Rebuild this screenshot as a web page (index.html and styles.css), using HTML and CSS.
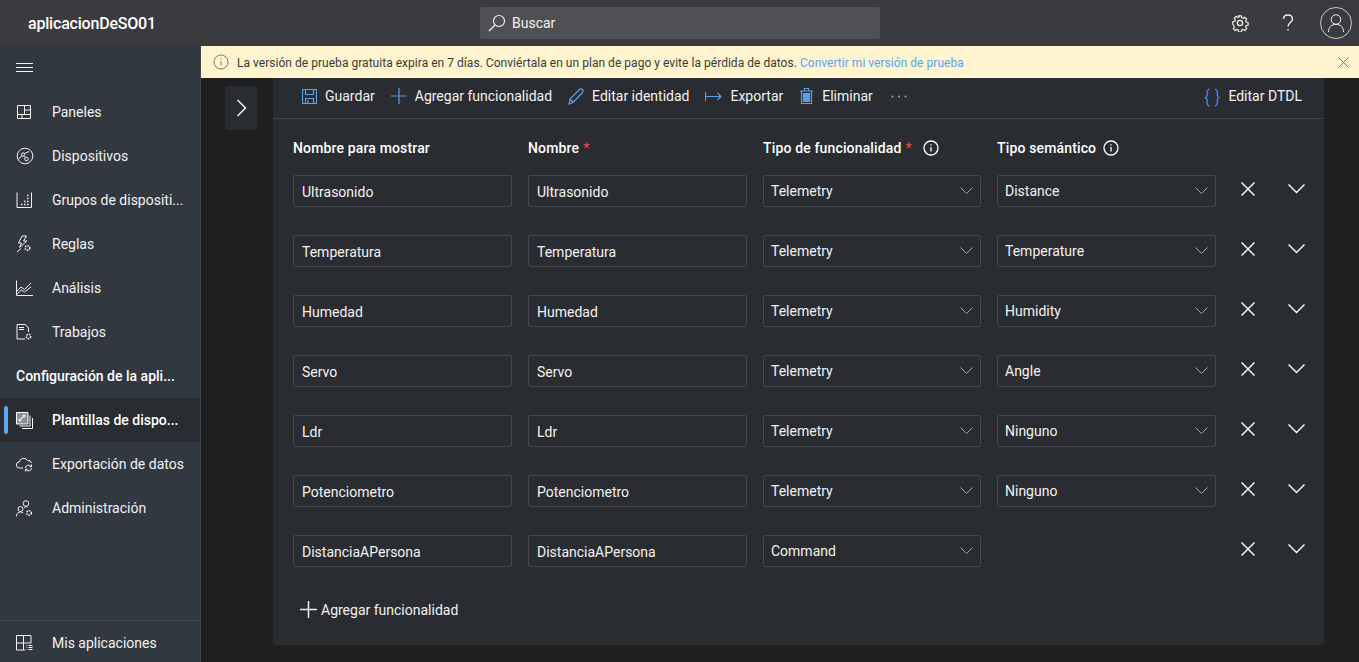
FILE: index.html
```html
<!DOCTYPE html>
<html lang="es">
<head>
  <meta charset="UTF-8">
  <title>aplicacionDeSO01</title>
  <link rel="stylesheet" href="styles.css">
</head>
<body>
  <header class="topbar">
    <div class="app-name">aplicacionDeSO01</div>
    <div class="search">
      <svg class="ico bright" width="20" height="20" viewBox="0 0 20 20"><circle cx="11" cy="8" r="5.500"/><path d="M7 12l-6 6"/></svg>
      <span>Buscar</span>
    </div>
    <div class="top-actions">
      <svg class="ico gear" width="18" height="18" viewBox="0 0 18 18"><circle cx="9" cy="9" r="2.600"/><path d="M7.500 1h3l.5 2.200 1.400.6 1.900-1.200 2.100 2.100-1.200 1.900.6 1.400 2.200.5v3l-2.200.5-.6 1.400 1.200 1.900-2.100 2.100-1.900-1.200-1.400.6-.5 2.200h-3l-.5-2.200-1.400-.6-1.900 1.200-2.100-2.100 1.200-1.900-.6-1.400L1 10.500v-3l2.200-.5.6-1.400-1.200-1.900 2.100-2.100 1.900 1.200 1.400-.6z" transform="translate(.9 .9) scale(.9)"/></svg>
      <svg class="ico help" width="12" height="18" viewBox="0 0 12 18"><path d="M1.500 5C1.500 2.500 3.500 1 6 1s4.500 1.600 4.500 4c0 3.500-4.500 3.500-4.500 7.500"/><path d="M6 15v1.500"/></svg>
      <div class="avatar">
        <svg class="ico" width="18" height="20" viewBox="0 0 18 20"><circle cx="9" cy="6.500" r="4.800"/><path d="M1.500 19c0-5 3.200-7.700 7.500-7.700s7.500 2.700 7.500 7.700"/></svg>
      </div>
    </div>
  </header>

  <div class="shell">
    <nav class="sidebar">
      <div class="nav-item burger">
        <svg class="ico" width="18" height="12" viewBox="0 0 18 12"><path d="M0 1.500h17M0 5.500h17M0 9.500h17"/></svg>
      </div>
      <a class="nav-item">
        <svg class="ico" width="16" height="16" viewBox="0 0 16 16"><path d="M1.500 1.500h13v13h-13zM1.500 10.500h13M8.500 1.500v9M8.500 6h6M6 10.500v4"/></svg>
        <span>Paneles</span>
      </a>
      <a class="nav-item">
        <svg class="ico" width="18" height="18" viewBox="0 0 18 18"><circle cx="9" cy="9" r="7.800"/><circle cx="7" cy="7.500" r="1.600"/><circle cx="10.500" cy="12" r="1.800"/><path d="M8.500 6.500L13 4.500M2.500 12l3.500-3M9 10.500L8 9"/></svg>
        <span>Dispositivos</span>
      </a>
      <a class="nav-item">
        <svg class="ico" width="16" height="16" viewBox="0 0 16 16"><path d="M1 .5v15h14.500V.5"/><path class="dots" d="M5 12.500h1.500M8 12.500h1.500M11 12.500h1.500M8 9.500h1.500M11 9.500h1.500M11 6.500h1.500M11 3.500h1.500"/></svg>
        <span>Grupos de dispositi...</span>
      </a>
      <a class="nav-item">
        <svg class="ico" width="16" height="18" viewBox="0 0 16 18"><path d="M6 1h4.500L7.500 6H11L3.500 12.500 5.500 8H2.500z"/><circle class="cog" cx="11.500" cy="13" r="2.300"/><path d="M1 17l4-3.500"/></svg>
        <span>Reglas</span>
      </a>
      <a class="nav-item">
        <svg class="ico" width="17" height="16" viewBox="0 0 17 16"><path d="M.5.500v15H17"/><path d="M1 11l4-4 3.500 2.500L15 3M1 14l4.500-4 3 2 6.500-5"/></svg>
        <span>Análisis</span>
      </a>
      <a class="nav-item">
        <svg class="ico" width="16" height="16" viewBox="0 0 16 16"><path d="M9 15H1V.5h8.500l3 3.500v4M3 3.500h5M3 5.500h5"/><circle class="cog" cx="12.500" cy="12.500" r="2.200"/></svg>
        <span>Trabajos</span>
      </a>
      <div class="nav-group">Configuración de la apli...</div>
      <a class="nav-item active">
        <svg class="ico" width="17" height="17" viewBox="0 0 17 17"><path d="M.5.500h11.500v11.500H.5z" fill="#8a8d91"/><path d="M14 3.500v10.500H3.500M16.500 6v10.500H6"/><circle cx="8" cy="4" r="1.200"/><circle cx="4" cy="8" r="1.200"/><path d="M5 7l2-2"/></svg>
        <span>Plantillas de dispo...</span>
      </a>
      <a class="nav-item">
        <svg class="ico" width="17" height="15" viewBox="0 0 17 15"><path d="M7 11H3.500a3 3 0 0 1-.3-6A4.500 4.500 0 0 1 11.500 3.500 3.500 3.500 0 0 1 15.500 6"/><path d="M9.500 11a3 3 0 0 1 5.500-1.500M15.500 11a3 3 0 0 1-5.500 1.500M15.500 7.500v2.200h-2M9.500 14.500v-2.200h2"/></svg>
        <span>Exportación de datos</span>
      </a>
      <a class="nav-item">
        <svg class="ico" width="17" height="17" viewBox="0 0 17 17"><circle cx="10" cy="3.500" r="2.800"/><circle cx="4.500" cy="9" r="2.500"/><path d="M.5 16.500c0-3 1.500-4.500 4-4.500 1 0 2 .3 2.500 1M8 8c1-1.200 2-1.500 3.500-1.300"/><circle class="cog" cx="13" cy="13" r="2.300"/></svg>
        <span>Administración</span>
      </a>
      <a class="nav-item nav-foot">
        <svg class="ico" width="17" height="16" viewBox="0 0 17 16"><path d="M9 15H.5V.5h14.500V8H.5M7.500.5V15M10.500 10.500h.8M10.500 12.500h.8M10.500 14.500h.8M12.500 10.500h4M12.500 12.500h4M12.500 14.500h4"/></svg>
        <span>Mis aplicaciones</span>
      </a>
    </nav>

    <div class="content">
      <div class="banner">
        <svg class="ico info-b" width="16" height="16" viewBox="0 0 16 16"><circle cx="8" cy="8" r="7"/><path d="M8 7v4.500M8 4.200v1.300"/></svg>
        <span>La versión de prueba gratuita expira en 7 días. Conviértala en un plan de pago y evite la pérdida de datos. <a class="link">Convertir mi versión de prueba</a></span>
        <svg class="ico close-b" width="11" height="11" viewBox="0 0 11 11"><path d="M.5.500l10 10M10.500.500l-10 10"/></svg>
      </div>

      <div class="workspace">
        <div class="expander">
          <svg class="ico" width="11" height="18" viewBox="0 0 11 18"><path d="M1.500 1l8 8-8 8"/></svg>
        </div>

        <section class="card">
          <div class="toolbar">
            <a class="tool">
              <svg class="ico blue" width="15" height="15" viewBox="0 0 15 15"><path d="M.5.500h14v14H.5zM3.500.5v5h8v-5M3.500 14.500V9.500h8v5M6 11v3.500"/></svg>
              Guardar
            </a>
            <a class="tool">
              <svg class="ico blue" width="16" height="16" viewBox="0 0 16 16"><path d="M8 0v16M0 8h16"/></svg>
              Agregar funcionalidad
            </a>
            <a class="tool">
              <svg class="ico blue" width="16" height="17" viewBox="0 0 16 17"><path d="M1 16l1-5L11.500 1.500a1.700 1.700 0 0 1 3 3L5 14.500zM2 11l3 3.500"/></svg>
              Editar identidad
            </a>
            <a class="tool">
              <svg class="ico blue" width="17" height="9" viewBox="0 0 17 9"><path d="M.5 0v9M.5 4.500h15.500M12.500 1l3.500 3.500L12.500 8"/></svg>
              Exportar
            </a>
            <a class="tool tool-del">
              <svg class="ico blue" width="13" height="16" viewBox="0 0 13 16"><path d="M1.500 3h10v12.500h-10zM0 3h13M4.500 3V.5h4V3"/><path class="fill-blue" d="M3.500 5.500h6v8h-6z"/></svg>
              Eliminar
            </a>
            <svg class="more" width="16" height="3" viewBox="0 0 16 3"><circle cx="1.500" cy="1.500" r="1"/><circle cx="8" cy="1.500" r="1"/><circle cx="14.500" cy="1.500" r="1"/></svg>
            <a class="tool tool-dtdl">
              <span class="braces">{ }</span>
              Editar DTDL
            </a>
          </div>

          <div class="cols caps-head">
            <div class="cap-head">Nombre para mostrar</div>
            <div class="cap-head">Nombre<i class="req">*</i></div>
            <div class="cap-head">Tipo de funcionalidad<i class="req">*</i>
              <svg class="ico info" width="16" height="16" viewBox="0 0 16 16"><circle cx="8" cy="8" r="7"/><path d="M8 7v4.500M8 4.200v1.300"/></svg>
            </div>
            <div class="cap-head">Tipo semántico
              <svg class="ico info" width="16" height="16" viewBox="0 0 16 16"><circle cx="8" cy="8" r="7"/><path d="M8 7v4.500M8 4.200v1.300"/></svg>
            </div>
          </div>

          <div class="cols caps">
            <div class="field">Ultrasonido</div>
            <div class="field">Ultrasonido</div>
            <div class="field select">Telemetry<svg class="ico caret" width="13" height="8" viewBox="0 0 13 8"><path d="M.5.500l6 6 6-6"/></svg></div>
            <div class="field select">Distance<svg class="ico caret" width="13" height="8" viewBox="0 0 13 8"><path d="M.5.500l6 6 6-6"/></svg></div>
            <div class="row-actions">
              <svg class="ico" width="14" height="14" viewBox="0 0 14 14"><path d="M.5.500l13 13M13.500.500l-13 13"/></svg>
              <svg class="ico" width="17" height="10" viewBox="0 0 17 10"><path d="M.5.500l8 8 8-8"/></svg>
            </div>

            <div class="field">Temperatura</div>
            <div class="field">Temperatura</div>
            <div class="field select">Telemetry<svg class="ico caret" width="13" height="8" viewBox="0 0 13 8"><path d="M.5.500l6 6 6-6"/></svg></div>
            <div class="field select">Temperature<svg class="ico caret" width="13" height="8" viewBox="0 0 13 8"><path d="M.5.500l6 6 6-6"/></svg></div>
            <div class="row-actions">
              <svg class="ico" width="14" height="14" viewBox="0 0 14 14"><path d="M.5.500l13 13M13.500.500l-13 13"/></svg>
              <svg class="ico" width="17" height="10" viewBox="0 0 17 10"><path d="M.5.500l8 8 8-8"/></svg>
            </div>

            <div class="field">Humedad</div>
            <div class="field">Humedad</div>
            <div class="field select">Telemetry<svg class="ico caret" width="13" height="8" viewBox="0 0 13 8"><path d="M.5.500l6 6 6-6"/></svg></div>
            <div class="field select">Humidity<svg class="ico caret" width="13" height="8" viewBox="0 0 13 8"><path d="M.5.500l6 6 6-6"/></svg></div>
            <div class="row-actions">
              <svg class="ico" width="14" height="14" viewBox="0 0 14 14"><path d="M.5.500l13 13M13.500.500l-13 13"/></svg>
              <svg class="ico" width="17" height="10" viewBox="0 0 17 10"><path d="M.5.500l8 8 8-8"/></svg>
            </div>

            <div class="field">Servo</div>
            <div class="field">Servo</div>
            <div class="field select">Telemetry<svg class="ico caret" width="13" height="8" viewBox="0 0 13 8"><path d="M.5.500l6 6 6-6"/></svg></div>
            <div class="field select">Angle<svg class="ico caret" width="13" height="8" viewBox="0 0 13 8"><path d="M.5.500l6 6 6-6"/></svg></div>
            <div class="row-actions">
              <svg class="ico" width="14" height="14" viewBox="0 0 14 14"><path d="M.5.500l13 13M13.500.500l-13 13"/></svg>
              <svg class="ico" width="17" height="10" viewBox="0 0 17 10"><path d="M.5.500l8 8 8-8"/></svg>
            </div>

            <div class="field">Ldr</div>
            <div class="field">Ldr</div>
            <div class="field select">Telemetry<svg class="ico caret" width="13" height="8" viewBox="0 0 13 8"><path d="M.5.500l6 6 6-6"/></svg></div>
            <div class="field select">Ninguno<svg class="ico caret" width="13" height="8" viewBox="0 0 13 8"><path d="M.5.500l6 6 6-6"/></svg></div>
            <div class="row-actions">
              <svg class="ico" width="14" height="14" viewBox="0 0 14 14"><path d="M.5.500l13 13M13.500.500l-13 13"/></svg>
              <svg class="ico" width="17" height="10" viewBox="0 0 17 10"><path d="M.5.500l8 8 8-8"/></svg>
            </div>

            <div class="field">Potenciometro</div>
            <div class="field">Potenciometro</div>
            <div class="field select">Telemetry<svg class="ico caret" width="13" height="8" viewBox="0 0 13 8"><path d="M.5.500l6 6 6-6"/></svg></div>
            <div class="field select">Ninguno<svg class="ico caret" width="13" height="8" viewBox="0 0 13 8"><path d="M.5.500l6 6 6-6"/></svg></div>
            <div class="row-actions">
              <svg class="ico" width="14" height="14" viewBox="0 0 14 14"><path d="M.5.500l13 13M13.500.500l-13 13"/></svg>
              <svg class="ico" width="17" height="10" viewBox="0 0 17 10"><path d="M.5.500l8 8 8-8"/></svg>
            </div>

            <div class="field">DistanciaAPersona</div>
            <div class="field">DistanciaAPersona</div>
            <div class="field select">Command<svg class="ico caret" width="13" height="8" viewBox="0 0 13 8"><path d="M.5.500l6 6 6-6"/></svg></div>
            <div class="blank"></div>
            <div class="row-actions">
              <svg class="ico" width="14" height="14" viewBox="0 0 14 14"><path d="M.5.500l13 13M13.500.500l-13 13"/></svg>
              <svg class="ico" width="17" height="10" viewBox="0 0 17 10"><path d="M.5.500l8 8 8-8"/></svg>
            </div>
          </div>

          <a class="add-cap">
            <svg class="ico" width="17" height="17" viewBox="0 0 17 17"><path d="M8.500 0v17M0 8.500h17"/></svg>
            Agregar funcionalidad
          </a>
        </section>
      </div>
    </div>
  </div>
</body>
</html>
```

FILE: styles.css
```css
* {
  box-sizing: border-box;
}
html, body {
  height: 100%;
}
body {
  margin: 0;
  overflow: hidden;
  font-family: Roboto, "Open Sans", Arial, sans-serif;
  font-size: 14px;
  color: #f3f2f1;
  background: #201f1f;
}
.ico {
  flex: none;
  display: block;
  fill: none;
  stroke: currentColor;
  stroke-width: 1;
}
.cog {
  stroke-width: 1.5;
  stroke-dasharray: 1.5 .9;
}
.dots {
  stroke-width: 1.6;
}

/* top bar */
.topbar {
  height: 46px;
  display: flex;
  align-items: center;
  background: #3b3a3f;
}
.app-name {
  width: 480px;
  padding-left: 28px;
  font-size: 16px;
  font-weight: 500;
  letter-spacing: -.2px;
  color: #fff;
}
.search {
  width: 400px;
  height: 32px;
  display: flex;
  align-items: center;
  gap: 4px;
  padding-left: 8px;
  border-radius: 2px;
  background: #504f54;
}
.bright {
  stroke-width: 1.2;
}
.top-actions {
  margin-left: auto;
  display: flex;
  align-items: center;
  padding-right: 7px;
}
.gear {
  stroke-width: 1.3;
}
.help {
  margin-left: 33px;
  margin-right: 26px;
  stroke-width: 1.4;
}
.avatar {
  width: 32px;
  height: 32px;
  display: flex;
  align-items: center;
  justify-content: center;
  border: 1px solid #c8c8c8;
  border-radius: 50%;
}

.shell {
  height: 616px;
  display: flex;
}

/* left nav */
.sidebar {
  width: 201px;
  flex: none;
  display: flex;
  flex-direction: column;
  background: #323840;
  border-right: 1px solid #45494f;
}
.nav-item {
  height: 44px;
  flex: none;
  display: flex;
  align-items: center;
  position: relative;
}
.nav-item .ico {
  margin-left: 16px;
}
.nav-item span {
  position: absolute;
  left: 52px;
  white-space: nowrap;
}
.nav-group {
  height: 44px;
  flex: none;
  display: flex;
  align-items: center;
  padding-left: 16px;
  font-weight: 500;
  color: #fff;
}
.active {
  background: #292c30;
  font-weight: 500;
  color: #fff;
}
.active::before {
  content: "";
  position: absolute;
  left: 4px;
  top: 8px;
  bottom: 8px;
  width: 4px;
  border-radius: 2px;
  background: #5ea6f7;
}
.nav-foot {
  margin-top: auto;
  height: 42px;
  padding-top: 3px;
  border-top: 1px solid #45494f;
}

/* right side */
.content {
  flex: 1;
  min-width: 0;
  display: flex;
  flex-direction: column;
}
.banner {
  height: 32px;
  flex: none;
  display: flex;
  align-items: center;
  padding-left: 12px;
  font-size: 12px;
  color: #3b3a39;
  background: #fff4ce;
}
.banner > span {
  margin-left: 8px;
  padding-top: 1px;
  letter-spacing: .03px;
}
.info-b {
  color: #7a7870;
}
.link {
  color: #5ba4f5;
}
.close-b {
  margin-left: auto;
  margin-right: 10px;
  color: #77766f;
}
.workspace {
  flex: 1;
  display: flex;
  align-items: flex-start;
  padding-left: 24px;
}
.expander {
  width: 32px;
  height: 44px;
  margin-top: 8px;
  display: flex;
  align-items: center;
  justify-content: center;
  border-radius: 3px;
  background: #292c30;
  stroke-width: 1.5;
}
.expander .ico {
  stroke-width: 1.5;
}
.card {
  width: 1051px;
  height: 567px;
  margin-left: 16px;
  border-radius: 0 0 4px 4px;
  background: #292c30;
}

/* command bar */
.toolbar {
  height: 41px;
  display: flex;
  align-items: center;
  gap: 16px;
  padding: 0 22px 4px 29px;
  border-bottom: 1px solid #414346;
}
.tool {
  display: flex;
  align-items: center;
  gap: 8px;
}
.tool-del {
  margin-left: 1px;
  gap: 9px;
}
.blue {
  color: #5a9fe8;
  stroke-width: 1.2;
}
.fill-blue {
  fill: #5a9fe8;
}
.more {
  margin-left: 2px;
  fill: #aaa;
}
.tool-dtdl {
  margin-left: auto;
}
.braces {
  font-size: 18px;
  font-weight: 300;
  color: #5a9fe8;
}

/* capability rows */
.cols {
  display: grid;
  grid-template-columns: 219px 219px 218px 219px 1fr;
  column-gap: 16px;
  padding-left: 20px;
}
.caps-head {
  height: 32px;
  margin: 13px 0 11px;
}
.cap-head {
  display: flex;
  align-items: center;
  font-weight: 500;
  letter-spacing: .15px;
  color: #fff;
  white-space: nowrap;
}
.req {
  font-style: normal;
  color: #e8453c;
  margin-left: 4px;
}
.info {
  margin-left: 7px;
  stroke-width: 1.3;
}
.req + .info {
  margin-left: 11px;
}
.caps {
  align-items: center;
  grid-auto-rows: 32px;
  row-gap: 28px;
}
.field {
  height: 32px;
  display: flex;
  align-items: center;
  justify-content: space-between;
  padding: 1px 8px 0;
  border: 1px solid #45474a;
  border-radius: 2px;
}
.select {
  padding: 0 7px;
}
.caret {
  color: #a8a8a8;
}
.row-actions {
  height: 32px;
  display: flex;
  align-items: center;
  gap: 33px;
  padding: 0 0 4px 9px;
}
.row-actions .ico {
  stroke-width: 1.5;
}
.add-cap {
  display: flex;
  align-items: center;
  gap: 4px;
  margin: 34px 0 0 27px;
}
.add-cap .ico {
  stroke-width: 1.5;
}
```
